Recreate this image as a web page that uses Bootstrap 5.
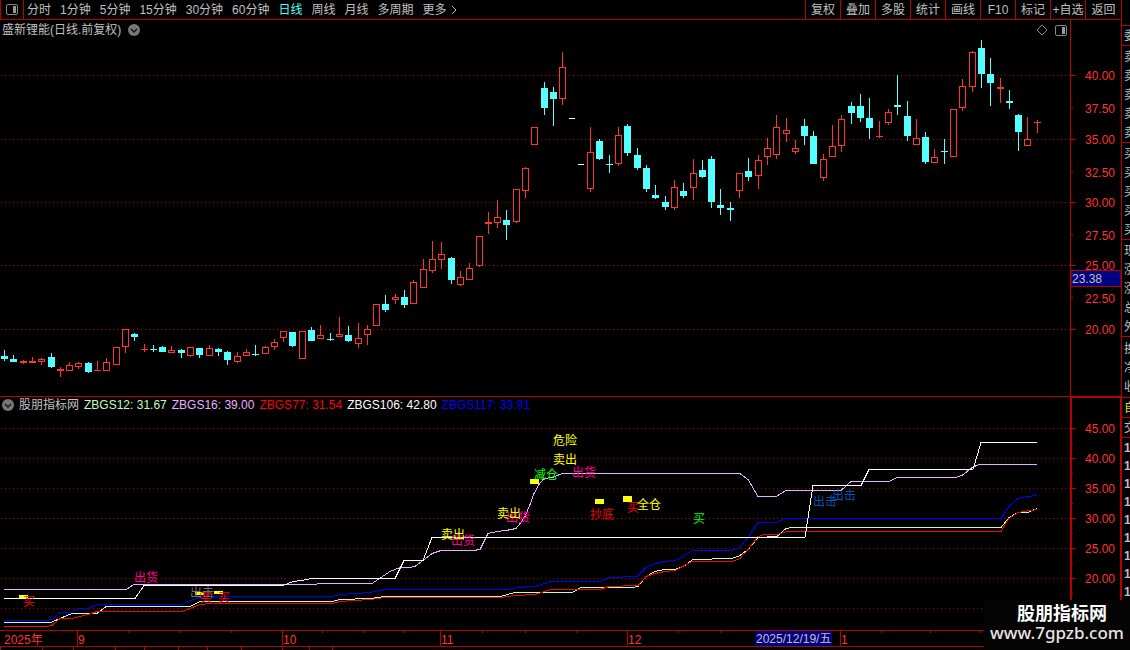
<!DOCTYPE html>
<html lang="zh-CN">
<head>
<meta charset="utf-8">
<meta name="viewport" content="width=device-width, initial-scale=1">
<title>盛新锂能 日线</title>
<link href="https://cdn.jsdelivr.net/npm/bootstrap@5.3.0/dist/css/bootstrap.min.css" rel="stylesheet">
<style>
  :root { --line: #b80000; --up: #ff3232; --down: #54ffff; }
  body { background: #000; color: #c0c0c0; font: 12px/16px "Liberation Sans", "Noto Sans CJK SC", sans-serif; overflow: hidden; }
  .fluid { min-width: 0; }
  .tabbar { height: 20px; border-bottom: 1px solid var(--line); }
  .tabbar .btn { --bs-btn-padding-x: 0; --bs-btn-padding-y: 0; --bs-btn-font-size: 12px; --bs-btn-line-height: 18px; --bs-btn-color: #c0c0c0; --bs-btn-border-radius: 0; --bs-btn-border-width: 0; --bs-btn-hover-color: #fff; white-space: nowrap; }
  .tabbar .btn.active { --bs-btn-active-color: var(--down); }
  .tabbar .panel-toggle { width: 24px; border-right: 1px solid var(--line); border-left: 1px solid var(--line); }
  .periods { gap: 9px; padding-left: 3px; }
  .tools .btn { width: 35px; border-left: 1px solid var(--line); }
  .tools .btn:last-child { width: 36px; }
  .pane-head { height: 20px; padding: 0 2px; gap: 7px; }
  .study-head { height: 17px; padding-left: 2px; gap: 5px; border-top: 1px solid var(--line); }
  .icon-btn { background: none; border: 0; padding: 0; line-height: 0; display: block; }
  svg { display: block; }
  svg text { font-size: 12px; }
  .scale { width: 51px; }
  .scale-top { border-left: 1px solid var(--line); height: 376px; }
  .scale-low { border: 2px solid var(--line); border-bottom: 0; height: 234px; margin-right: -1px; }
  .price-plot { height: 356px; }
  .study-plot { height: 217px; }
  .time-axis { height: 17px; border-top: 1px solid var(--line); border-bottom: 1px solid var(--line); }
  .quote { width: 9px; border-left: 1px solid var(--line); overflow: hidden; padding-top: 25px; }
  .quote section { border-top: 1px solid var(--line); padding: 2px 0 0 2px; white-space: nowrap; }
  .five { height: 97px; } .three { height: 61px; } .one { height: 20px; }
  .ticks { gap: 2px; font-weight: 700; }
  .own { color: #e0e000; }
  .s12 { color: #c0ffc0; } .s16 { color: #e8b0ff; } .s77 { color: #f00; } .s106 { color: #fff; } .s117 { color: #00f; }
  .index-strip { height: 3px; overflow: hidden; }
  .site-mark { right: 0; bottom: 0; width: 146px; height: 50px; background: #040404; color: #fff; }
  .site-mark strong { font-size: 18px; line-height: 20px; padding-left: 10px; }
  .site-mark a { font: 500 17px/18px "Noto Sans", sans-serif; color: #ece2e2; }
</style>
</head>
<body>
<div class="d-flex min-vh-100 position-relative">
  <main class="fluid flex-grow-1 d-flex flex-column">
    <nav class="tabbar d-flex justify-content-between">
      <div class="d-flex">
        <button class="btn panel-toggle d-flex align-items-center justify-content-center" aria-label="侧栏">
          <svg width="12" height="11" viewBox="0 0 12 11"><rect x=".5" y=".5" width="11" height="10" rx="1.5" fill="none" stroke="#888"/><rect x="7" y="2" width="3" height="7" fill="#999"/></svg>
        </button>
        <div class="periods d-flex">
          <button class="btn">分时</button><button class="btn">1分钟</button><button class="btn">5分钟</button><button class="btn">15分钟</button><button class="btn">30分钟</button><button class="btn">60分钟</button><button class="btn active">日线</button><button class="btn">周线</button><button class="btn">月线</button><button class="btn">多周期</button>
          <button class="btn d-flex align-items-center gap-1">更多<svg width="7" height="10" viewBox="0 0 7 10"><path d="M1 1l4 4-4 4" fill="none" stroke="#c0c0c0"/></svg></button>
        </div>
      </div>
      <div class="tools d-flex">
        <button class="btn">复权</button><button class="btn">叠加</button><button class="btn">多股</button><button class="btn">统计</button><button class="btn">画线</button><button class="btn">F10</button><button class="btn">标记</button><button class="btn">+自选</button><button class="btn">返回</button>
      </div>
    </nav>

    <div class="d-flex">
      <div class="fluid flex-grow-1">
        <div class="pane-head d-flex align-items-center">
          <span>盛新锂能(日线.前复权)</span>
          <button class="icon-btn" aria-label="展开"><svg width="12" height="12" viewBox="0 0 12 12"><circle cx="6" cy="6" r="6" fill="#787878"/><path d="M3 5l3 3 3-3" fill="none" stroke="#111" stroke-width="1.4"/></svg></button>
          <button class="icon-btn ms-auto" aria-label="标记点"><svg width="12" height="12" viewBox="0 0 12 12"><path d="M6 1l5 5-5 5-5-5z" fill="none" stroke="#888"/></svg></button>
          <button class="icon-btn" aria-label="面板"><svg width="13" height="11" viewBox="0 0 13 11"><rect x=".5" y=".5" width="11" height="10" rx="1.5" fill="none" stroke="#888"/><rect x="7" y="2" width="3" height="7" fill="#999"/></svg></button>
        </div>
        <svg id="price" class="price-plot w-100" role="img" aria-label="日线"></svg>
        <div class="study-head d-flex align-items-center">
          <button class="icon-btn" aria-label="展开"><svg width="12" height="12" viewBox="0 0 12 12"><circle cx="6" cy="6" r="6" fill="#787878"/><path d="M3 5l3 3 3-3" fill="none" stroke="#111" stroke-width="1.4"/></svg></button>
          <span>股朋指标网</span>
          <span class="s12">ZBGS12: 31.67</span>
          <span class="s16">ZBGS16: 39.00</span>
          <span class="s77">ZBGS77: 31.54</span>
          <span class="s106">ZBGS106: 42.80</span>
          <span class="s117">ZBGS117: 33.91</span>
        </div>
        <svg id="study" class="study-plot w-100" role="img" aria-label="指标"></svg>
      </div>
      <div class="scale">
        <svg id="scaleTop" class="scale-top w-100"></svg>
        <div class="scale-low"><svg id="scaleLow" width="48" height="232"></svg></div>
      </div>
    </div>
    <svg id="time" class="time-axis w-100"></svg>
    <div class="index-strip"><svg id="strip" width="100%" height="20"></svg></div>
  </main>

  <aside class="quote flex-shrink-0">
    <section class="one">委比</section>
    <section class="five d-flex flex-column justify-content-around"><span>卖五</span><span>卖四</span><span>卖三</span><span>卖二</span><span>卖一</span></section>
    <section class="five d-flex flex-column justify-content-around"><span>买一</span><span>买二</span><span>买三</span><span>买四</span><span>买五</span></section>
    <section class="five d-flex flex-column justify-content-around"><span>现价</span><span>涨跌</span><span>涨幅</span><span>总量</span><span>外盘</span></section>
    <section class="three d-flex flex-column justify-content-around"><span>换手</span><span>净资</span><span>收益</span></section>
    <section class="one own">自选</section>
    <section class="one">交易</section>
    <section class="ticks d-flex flex-column"><span>14</span><span>14</span><span>14</span><span>14</span><span>14</span><span>14</span><span>14</span><span>14</span><span>14</span></section>
  </aside>

  <div class="site-mark position-absolute text-center d-flex flex-column justify-content-center pb-1">
    <strong>股朋指标网</strong>
    <a href="#" class="text-decoration-none">www.7gpzb.com</a>
  </div>
</div>

<script>
// Candles: x, high, body top, body bottom, low, kind (u = hollow up, f = flat up, d = down)
const candles = `4 350 356 359 361 d;13 355 359 362 362 d;23 360 361 363 364 f;32 357 361 363 363 f;41 358 359 362 365 u;51 353 357 367 368 d;60 367 369 371 377 f;69 362 365 371 371 u;78 362 363 367 369 u;88 362 363 372 373 d;97 361 370 371 371 u;106 358 362 371 371 u;116 347 347 365 365 u;125 329 329 347 353 u;134 333 334 337 341 d;144 344 349 350 352 f;153 345 349 350 352 d;162 346 347 352 352 d;171 346 350 353 353 u;181 349 350 353 358 d;190 347 347 356 357 u;199 348 348 355 358 d;209 345 348 356 356 u;218 348 349 352 356 d;227 351 352 360 365 d;237 352 356 362 363 u;246 349 352 356 356 u;255 345 354 355 356 d;265 346 347 354 354 u;274 339 342 347 350 u;283 331 331 338 342 u;292 332 332 346 347 d;302 331 331 359 359 u;311 327 330 341 341 d;320 325 335 339 339 u;330 333 339 340 341 d;339 317 334 337 337 u;348 326 335 341 342 d;358 323 338 344 348 u;367 325 329 335 345 u;376 304 304 326 326 u;385 295 304 310 312 d;395 294 297 300 304 u;404 290 297 305 308 d;413 280 282 304 304 u;423 259 269 288 288 u;432 241 259 271 273 u;441 242 254 260 269 u;451 257 258 280 284 d;460 271 277 285 286 u;469 263 268 280 280 u;479 236 236 266 267 u;488 212 222 224 234 f;497 200 217 223 228 u;506 210 220 225 240 d;516 189 189 222 223 u;525 167 168 191 198 u;534 127 127 145 145 u;544 82 88 108 115 d;553 87 92 99 126 d;562 52 67 99 105 u;590 127 152 189 192 u;599 139 141 159 160 d;609 155 164 165 173 d;618 127 135 164 166 u;627 124 126 153 156 d;637 148 155 168 170 d;646 165 168 189 192 d;655 185 195 198 199 d;665 196 202 207 210 d;674 180 187 208 210 u;683 183 191 196 198 d;693 159 173 188 200 u;702 160 170 177 178 d;711 156 159 202 208 d;720 189 205 208 215 d;730 202 208 210 221 d;739 173 173 191 198 u;748 158 171 177 181 d;758 155 160 176 189 u;767 138 148 157 165 u;776 115 127 155 159 u;786 118 130 134 142 u;795 140 148 152 154 u;804 119 126 136 145 d;813 131 136 164 164 d;823 154 159 178 181 u;832 125 146 157 157 u;841 115 119 146 152 u;851 102 106 113 124 d;860 94 106 118 122 d;869 98 118 128 139 d;879 121 136 137 138 f;888 109 112 123 125 u;897 75 105 107 115 d;907 101 116 136 141 d;916 119 138 145 145 u;925 132 137 162 164 d;934 149 157 163 163 u;944 139 151 152 164 d;953 109 109 157 157 u;962 79 86 108 111 u;972 51 52 87 92 u;981 40 48 74 88 d;990 58 74 83 106 d;1000 78 87 89 103 f;1009 90 101 103 109 d;1018 114 115 132 151 d;1027 117 139 146 146 u;1037 120 122 123 133 f`
  .split(';').map(r => r.split(' '));

const series = [
  ['#00f', '4,620 46,620 52,619 60,612 70,612 78,608 88,608 97,604 182,604 190,600 200,597 210,596 332,596 340,594 370,592 385,589 508,589 517,587 535,586 551,581 600,581 609,577 637,576 646,567 655,563 665,561 675,560 683,556 692,550 732,550 740,547 750,534 758,522 777,522 786,518 1001,518 1009,506 1018,498 1027,496 1037,495'],
  ['#c0ffc0', '4,622 51,622 60,618 72,613 97,613 106,606 190,606 200,601 332,601 340,599 370,598 385,596 500,596 515,592 572,592 581,587 632,587 638,586 646,576 655,571 664,569 675,569 685,565 693,559 732,558 740,555 749,548 758,537 777,536 786,528 792,527 1001,527 1009,517 1018,512 1028,512 1037,508'],
  ['#f00', '4,626 46,626 52,625 60,618 72,618 88,614 97,611 182,611 200,604 210,603 332,603 340,601 370,599 385,597 500,597 515,595 535,594 551,589 600,589 609,586 638,585 646,576 655,573 665,571 675,570 692,561 732,561 740,558 748,549 758,536 765,534 778,534 786,531 1001,531 1009,518 1018,512 1037,509'],
  ['#e8b0ff', '4,589 126,589 134,584 316,584 318,583 372,583 381,577 390,571 400,567 409,567 415,566 423,560 432,553 441,550 473,550 480,549 488,533 497,531 506,530 516,528 520,523 525,516 530,504 534,493 539,484 544,478 553,477 562,473 740,473 748,479 758,496 776,496 786,490 841,490 851,481 889,481 897,477 955,477 962,475 972,467 979,464 1037,464'],
  ['#fff', '4,598 135,598 144,585 283,585 293,581 302,580 311,578 395,578 404,560 423,560 432,537 805,537 813,485 861,485 869,469 973,469 981,442 1037,442']
];

// Signals: x, y of the middle, text, colour
const signals = [
  [134, 577, '出货', '#ff0090'], [190, 592, '出击', '#707070'], [23, 601, '买', '#f00'], [200, 597, '买', '#f00'], [218, 597, '买', '#f00'],
  [451, 540, '出货', '#ff0090'], [441, 534, '卖出', '#ff0'], [506, 517, '出货', '#ff0090'], [497, 513, '卖出', '#ff0'],
  [534, 474, '减仓', '#0f0'], [553, 440, '危险', '#ff0'], [553, 459, '卖出', '#ff0'], [572, 472, '出货', '#ff0090'],
  [590, 514, '抄底', '#f00'], [627, 507, '买', '#f00'], [637, 504, '全仓', '#ff0'], [693, 518, '买', '#0f0'],
  [813, 501, '出击', '#0055b0'], [832, 495, '出击', '#0055b0']
];
const flags = [[19, 595, 3], [195, 592, 3], [214, 591, 3], [530, 479, 5], [595, 499, 5], [623, 496, 6]];

const BASE = 1070;
const el = id => document.getElementById(id);
const rect = (x, y, w, h, c, extra = '') => `<rect x="${x}" y="${y}" width="${w}" height="${h}" fill="${c}" ${extra}/>`;
const text = (x, mid, s, c) => `<text x="${x}" y="${mid + 5}" fill="${c}">${s}</text>`;
const grid = (y, w) => `<path d="M1 ${y + .5}H${w}" stroke="#b00000" stroke-dasharray="1 3"/>`;

function draw() {
  const w = el('price').clientWidth, X = x => Math.round(x * w / BASE);
  let s = [75, 139, 202, 265, 329].map(y => grid(y, w)).join('');
  for (const [x0, hi, top, bot, lo, k] of candles.map(c => [...c.slice(0, 5).map(Number), c[5]])) {
    const x = X(x0), c = k === 'd' ? '#54ffff' : '#ff3232';
    s += rect(x, hi, 1, lo - hi, c);
    const h = Math.max(1, bot - top);
    s += k === 'u' && h > 2 ? rect(x - 2.5, top + .5, 6, h - 1, '#000', `stroke="${c}"`) : rect(x - 3, top, 7, h, c);
  }
  s += rect(X(569), 118, 6, 1, '#fff') + rect(X(578), 164, 6, 1, '#fff');
  el('price').innerHTML = `<g transform="translate(0 -40)">${s}</g>`;

  s = [428, 458, 488, 518, 548, 578, 608].map(y => grid(y, w)).join('');
  for (const [c, p] of series) {
    const pts = p.split(' ').map(q => { const [a, b] = q.split(',').map(Number); return X(a) + ',' + (b + .5); }).join(' ');
    s += `<polyline points="${pts}" fill="none" stroke="${c}" shape-rendering="crispEdges"/>`;
  }
  for (const [x, y, h] of flags) s += rect(X(x), y, 9, h, '#ff0');
  for (const [x, y, t, c] of signals) s += text(X(x), y, t, c);
  el('study').innerHTML = `<g transform="translate(0 -413)">${s}</g>`;

  s = '';
  for (const x of [128, 180, 231, 322, 363, 404, 482, 525, 576, 678, 720, 881, 930, 980]) s += rect(X(x), 0, 1, 2, '#b80000');
  for (const [x, t] of [[77, '9'], [282, '10'], [440, '11'], [627, '12'], [840, '1']]) s += rect(X(x), 0, 1, 15, '#b80000') + text(X(x) + 1, 8, t, '#ff3232');
  s += text(4, 8, '2025年', '#ff3232') + rect(X(755), 0, 77, 15, '#000080') + text(X(755) + 1, 7, '2025/12/19/五', '#c0c0c0');
  el('time').innerHTML = s;

  s = '';
  for (const x of [0, 42, 73, 115, 144, 178, 207, 241, 282, 309, 332]) s += rect(X(x), 0, 1, 3, '#b80000');
  el('strip').innerHTML = s;
}

function scales() {
  let s = '';
  for (const [y, mid, t] of [[75, 75, '40.00'], [107, 108, '37.50'], [139, 139, '35.00'], [171, 172, '32.50'], [202, 202, '30.00'], [234, 235, '27.50'], [265, 265, '25.00'], [297, 298, '22.50'], [329, 329, '20.00']])
    s += rect(0, y, t.endsWith('50') ? 2 : 5, 1, '#b80000') + text(14, mid, t, '#ff3232');
  s += rect(0, 270.5, 50, 16, '#000080', 'stroke="#b80000"') + text(1, 278, '23.38', '#c0c0c0');
  el('scaleTop').innerHTML = `<g transform="translate(0 -20)">${s}</g>`;
  s = '';
  for (let i = 0; i < 6; i++) {
    const y = 428 + i * 30;
    s += rect(0, y, 4, 1, '#b80000') + rect(0, y + 15, 1, 1, '#b80000') + text(13, y, (45 - i * 5) + '.00', '#ff3232');
  }
  el('scaleLow').innerHTML = `<g transform="translate(0 -398)">${s}</g>`;
}
scales();
draw();
addEventListener('resize', draw);
</script>
<script src="https://cdn.jsdelivr.net/npm/bootstrap@5.3.0/dist/js/bootstrap.bundle.min.js"></script>
</body>
</html>
